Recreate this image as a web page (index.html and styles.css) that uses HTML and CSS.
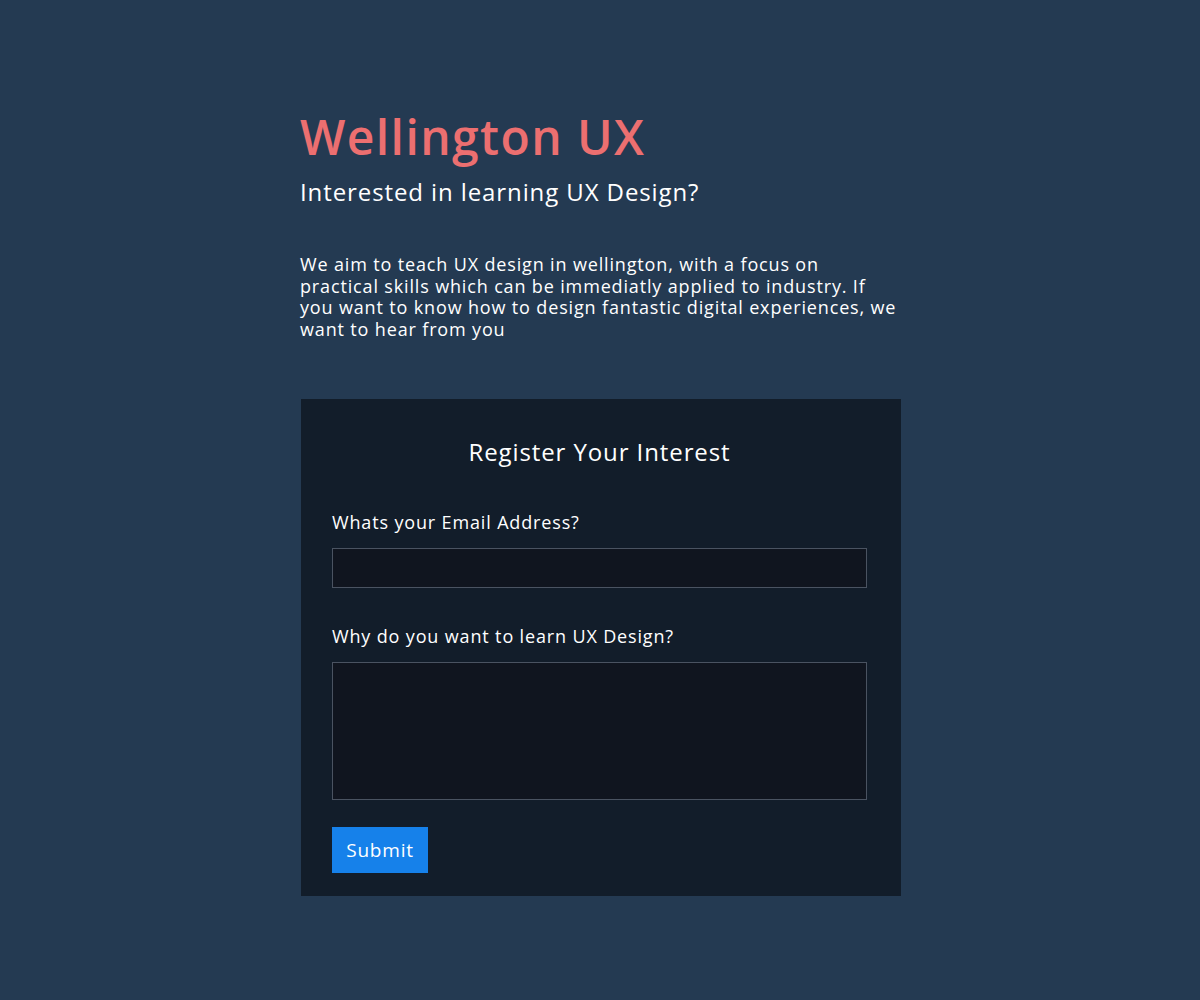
FILE: index.html
```html
<!DOCTYPE html>
<html lang="en">
<head>
<meta charset="utf-8">
<title>Wellington UX</title>
<link rel="stylesheet" href="styles.css">
</head>
<body>
<main class="page">
  <header class="intro">
    <h1 class="title">Wellington UX</h1>
    <h2 class="subtitle">Interested in learning UX Design?</h2>
    <p class="lead">We aim to teach UX design in wellington, with a focus on practical skills which can be immediatly applied to industry. If you want to know how to design fantastic digital experiences, we want to hear from you</p>
  </header>
  <form class="panel">
    <h3 class="panel-title">Register Your Interest</h3>
    <label class="label" for="email">Whats your Email Address?</label>
    <input class="field" id="email" type="email">
    <label class="label" for="why">Why do you want to learn UX Design?</label>
    <textarea class="field area" id="why"></textarea>
    <button class="submit" type="button">Submit</button>
  </form>
</main>
</body>
</html>
```
FILE: styles.css
```css
* { box-sizing: border-box; }
html, body { margin: 0; padding: 0; }
body {
  background: #243a52;
  color: #ffffff;
  font-family: "Open Sans", "Noto Sans", sans-serif;
  min-height: 1000px;
}
.page {
  width: 600px;
  margin: 0 auto;
  padding-top: 107px;
}
.title {
  margin: 0;
  font-size: 48px;
  line-height: 60px;
  font-weight: 600;
  letter-spacing: 1.4px;
  color: #ec6f70;
}
.subtitle {
  margin: 10px 0 0;
  font-size: 24px;
  line-height: 30px;
  font-weight: 400;
  letter-spacing: 0.9px;
}
.lead {
  margin: 47px 0 0;
  font-size: 18px;
  line-height: 21.6px;
  font-weight: 400;
  letter-spacing: 0.85px;
}
.panel {
  width: 600px;
  margin-top: 59px;
  margin-left: 1px;
  background: #121d2a;
  padding: 38px 34px 23px 31px;
  display: flex;
  flex-direction: column;
}
.panel-title {
  margin: 0 0 44px;
  text-align: center;
  font-size: 24px;
  line-height: 30px;
  font-weight: 400;
  letter-spacing: 0.9px;
}
.label {
  font-size: 18px;
  line-height: 22px;
  margin-bottom: 15px;
  letter-spacing: 0.85px;
}
.field {
  display: block;
  width: 100%;
  height: 40px;
  background: #10151f;
  border: 1px solid #4a5361;
  margin: 0 0 37px;
  color: #fff;
  font: inherit;
  outline: none;
}
.area {
  height: 138px;
  resize: none;
  margin-bottom: 27px;
}
.submit {
  align-self: flex-start;
  width: 96px;
  height: 46px;
  background: #1681ea;
  border: 0;
  color: #fff;
  font-family: inherit;
  font-size: 19px;
  letter-spacing: 0.8px;
  padding: 0;
}
```
